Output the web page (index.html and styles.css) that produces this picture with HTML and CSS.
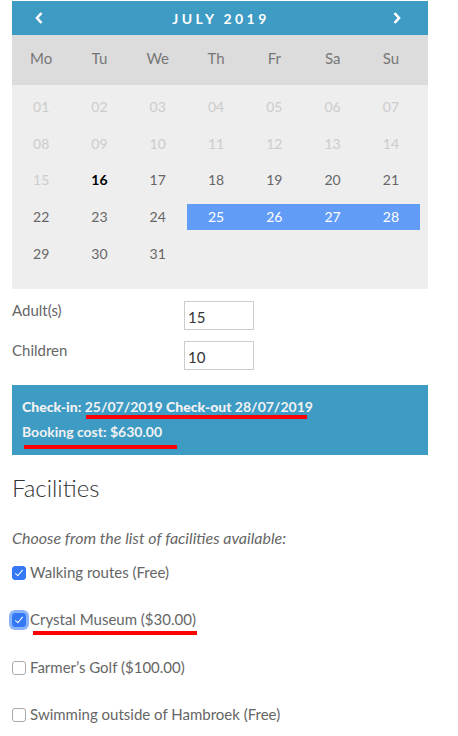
FILE: index.html
```html
<!DOCTYPE html>
<html>
<head>
    <title>Booking</title>
    <link rel="stylesheet" href="styles.css">
</head>
<body>
    <div class="calendar">
        <div class="cal-header">
            <svg class="nav" width="8" height="12" viewBox="0 0 8 12"><path d="M6.5 1 L2 6 L6.5 11" fill="none" stroke="white" stroke-width="2.6"/></svg>
            <span class="month">JULY 2019</span>
            <svg class="nav" width="8" height="12" viewBox="0 0 8 12"><path d="M1.5 1 L6 6 L1.5 11" fill="none" stroke="white" stroke-width="2.6"/></svg>
        </div>
        <div class="weekdays">
            <span>Mo</span><span>Tu</span><span>We</span><span>Th</span><span>Fr</span><span>Sa</span><span>Su</span>
        </div>
        <div class="days">
            <span class="off">01</span><span class="off">02</span><span class="off">03</span><span class="off">04</span><span class="off">05</span><span class="off">06</span><span class="off">07</span>
            <span class="off">08</span><span class="off">09</span><span class="off">10</span><span class="off">11</span><span class="off">12</span><span class="off">13</span><span class="off">14</span>
            <span class="off">15</span><span class="today">16</span><span>17</span><span>18</span><span>19</span><span>20</span><span>21</span>
            <span>22</span><span>23</span><span>24</span><span class="sel">25</span><span class="sel">26</span><span class="sel">27</span><span class="sel">28</span>
            <span>29</span><span>30</span><span>31</span>
        </div>
    </div>

    <div class="guests">
        <div class="guest-row">
            <label for="adults">Adult(s)</label>
            <input type="text" id="adults" value="15">
        </div>
        <div class="guest-row">
            <label for="children">Children</label>
            <input type="text" id="children" value="10">
        </div>
    </div>

    <div class="summary">
        <div class="line"><b>Check-in:</b> 25/07/2019 <b>Check-out</b> 28/07/2019<i class="mark mark-dates"></i></div>
        <div class="line">Booking cost: $630.00<i class="mark mark-cost"></i></div>
    </div>

    <h2>Facilities</h2>
    <p class="hint">Choose from the list of facilities available:</p>
    <ul class="facilities">
        <li><span class="box checked"></span>Walking routes (Free)</li>
        <li><span class="box checked focus"></span>Crystal Museum ($30.00)<i class="mark mark-museum"></i></li>
        <li><span class="box"></span>Farmer’s Golf ($100.00)</li>
        <li><span class="box"></span>Swimming outside of Hambroek (Free)</li>
    </ul>
</body>
</html>
```

FILE: styles.css
```css
body {
    font-family: 'Lato', 'Noto Sans', sans-serif;
    margin: 0;
    padding: 1px 30px 0 12px;
    background: white;
    color: #666;
    font-size: 15px;
}
.calendar {
    width: 416px;
}
.cal-header {
    background: #3d9bc4;
    color: white;
    height: 34px;
    display: flex;
    align-items: center;
    justify-content: space-between;
    padding: 0 27px 0 23px;
}
.nav {
    display: block;
    margin-top: -1px;
}
.month {
    font-size: 14px;
    font-weight: bold;
    letter-spacing: 3.4px;
    margin-left: 6px;
}
.weekdays {
    background: #dcdcdc;
    height: 50px;
    box-sizing: border-box;
    padding-bottom: 4px;
    display: grid;
    grid-template-columns: repeat(7, 58.3px);
    align-items: center;
    color: #777;
}
.weekdays span, .days span {
    text-align: center;
}
.days {
    background: #eeeeee;
    display: grid;
    grid-template-columns: repeat(7, 58.3px);
    grid-auto-rows: 36.6px;
    align-items: center;
    padding: 4px 0 17px;
    font-size: 14px;
}
.days span {
    line-height: 26px;
}
.days .off {
    color: #ccc;
}
.days .today {
    color: black;
    font-weight: bold;
}
.days .sel {
    background: #619cf7;
    color: white;
    margin-top: -1px;
}
.guests {
    padding-top: 12px;
}
.guest-row {
    display: flex;
    align-items: flex-start;
    margin-bottom: 11px;
}
.guest-row label {
    width: 172px;
    line-height: 18px;
}
.guest-row input {
    width: 62px;
    height: 24px;
    border: 1px solid #ccc;
    padding: 3px 3px 0;
    margin: 0;
    font-family: inherit;
    font-size: 15px;
    color: #333;
}
.summary {
    background: #3d9bc4;
    color: #f2f2f2;
    margin-top: 15px;
    width: 396px;
    padding: 9px 10px 11px;
    font-size: 14px;
    font-weight: bold;
}
.line {
    position: relative;
    line-height: 25px;
}
.mark {
    position: absolute;
    height: 4px;
    background: #f00;
}
.mark-dates {
    left: 64px;
    width: 221px;
    top: 21px;
}
.mark-cost {
    left: 2px;
    width: 153px;
    top: 26px;
}
h2 {
    font-size: 24px;
    font-weight: 300;
    color: #333;
    margin: 18px 0 0;
}
.hint {
    font-style: italic;
    font-size: 16px;
    margin: 26px 0 0;
}
.facilities {
    list-style: none;
    margin: 15px 0 0;
    padding: 0;
}
.facilities li {
    position: relative;
    display: flex;
    align-items: flex-start;
    height: 47.5px;
    line-height: 20px;
}
.box {
    width: 14px;
    height: 14px;
    border: 1px solid #aaa;
    border-radius: 3px;
    margin: 4px 4px 0 0;
    box-sizing: border-box;
    background: white;
    position: relative;
}
.box.checked {
    background: #3478f6;
    border-color: #3478f6;
}
.box.checked::after {
    content: "";
    position: absolute;
    left: 4px;
    top: 1px;
    width: 3px;
    height: 7px;
    border: solid white;
    border-width: 0 1.5px 1.5px 0;
    transform: rotate(40deg);
}
.box.focus {
    box-shadow: 0 0 0 3px #8ab4f8;
}
.mark-museum {
    left: 21px;
    width: 164px;
    top: 22px;
}
```
